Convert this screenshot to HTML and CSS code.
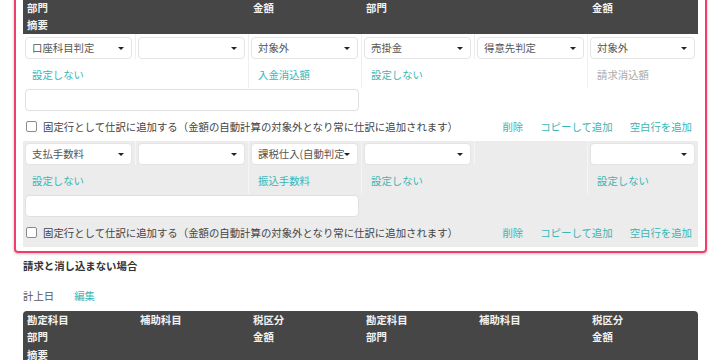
FILE: index.html
```html
<!DOCTYPE html>
<html>
<head>
    <meta charset="utf-8">
    <title>消込設定</title>
    <link rel="stylesheet" href="styles.css">
</head>
<body>
<div class="page">
    <div class="journal-box">
        <div class="journal-head">
            <span>勘定科目</span><span>補助科目</span><span>税区分</span>
            <span>勘定科目</span><span>補助科目</span><span>税区分</span>
            <span>部門</span><span></span><span>金額</span>
            <span>部門</span><span></span><span>金額</span>
            <span class="wide">摘要</span>
        </div>

        <div class="entry first">
            <div class="cell sel"><div class="select"><span>口座科目判定</span><i></i></div></div>
            <div class="cell sel"><div class="select"><span></span><i></i></div></div>
            <div class="cell sel"><div class="select"><span>対象外</span><i></i></div></div>
            <div class="cell sel"><div class="select"><span>売掛金</span><i></i></div></div>
            <div class="cell sel"><div class="select"><span>得意先判定</span><i></i></div></div>
            <div class="cell sel last"><div class="select"><span>対象外</span><i></i></div></div>

            <div class="cell lbl span2"><a href="#">設定しない</a></div>
            <div class="cell lbl"><a href="#">入金消込額</a></div>
            <div class="cell lbl span2"><a href="#">設定しない</a></div>
            <div class="cell lbl last"><span class="muted">請求消込額</span></div>

            <div class="cell memo span3"><input type="text" class="memo-input"></div>
            <div class="cell span3"></div>

            <div class="cell check-row span6">
                <label class="fixed"><span class="box"></span>固定行として仕訳に追加する（金額の自動計算の対象外となり常に仕訳に追加されます）</label>
                <div class="actions">
                    <a href="#">削除</a><a href="#">コピーして追加</a><a href="#">空白行を追加</a>
                </div>
            </div>
        </div>

        <div class="entry alt">
            <div class="cell sel"><div class="select"><span>支払手数料</span><i></i></div></div>
            <div class="cell sel"><div class="select"><span></span><i></i></div></div>
            <div class="cell sel"><div class="select"><span>課税仕入(自動判定)</span><i></i></div></div>
            <div class="cell sel"><div class="select"><span></span><i></i></div></div>
            <div class="cell sel"></div>
            <div class="cell sel last"><div class="select"><span></span><i></i></div></div>

            <div class="cell lbl span2"><a href="#">設定しない</a></div>
            <div class="cell lbl"><a href="#">振込手数料</a></div>
            <div class="cell lbl span2"><a href="#">設定しない</a></div>
            <div class="cell lbl last"><a href="#">設定しない</a></div>

            <div class="cell memo span3"><input type="text" class="memo-input"></div>
            <div class="cell span3"></div>

            <div class="cell check-row span6">
                <label class="fixed"><span class="box"></span>固定行として仕訳に追加する（金額の自動計算の対象外となり常に仕訳に追加されます）</label>
                <div class="actions">
                    <a href="#">削除</a><a href="#">コピーして追加</a><a href="#">空白行を追加</a>
                </div>
            </div>
        </div>
    </div>

    <div class="section">
        <h4>請求と消し込まない場合</h4>
        <div class="date-line">計上日<a href="#">編集</a></div>
        <div class="journal-head rounded">
            <span>勘定科目</span><span>補助科目</span><span>税区分</span>
            <span>勘定科目</span><span>補助科目</span><span>税区分</span>
            <span>部門</span><span></span><span>金額</span>
            <span>部門</span><span></span><span>金額</span>
            <span class="wide">摘要</span>
        </div>
    </div>
</div>
</body>
</html>
```

FILE: styles.css
```css
body {
    margin: 0;
    background: #fff;
    font-family: "Noto Sans CJK JP", "Noto Sans", sans-serif;
    font-size: 10.4px;
    color: #444;
    overflow: hidden;
}

a {
    color: #3ab6b6;
    text-decoration: none;
}

.page {
    padding-left: 14px;
}

/* 仕訳ボックス（スクロールで上端が隠れている） */
.journal-box {
    width: 693px;
    box-sizing: border-box;
    margin-top: -28px;
    padding: 7px 7px 4px 7px;
    border: 2px solid #f23c6e;
    border-radius: 4px;
    box-shadow: 0 1px 3px rgba(0, 0, 0, 0.25);
}

.journal-head {
    display: grid;
    grid-template-columns: repeat(5, 113px) 1fr;
    background: #464646;
    color: #f2f2f2;
    font-weight: bold;
    line-height: 17.5px;
}

.journal-head span {
    padding-left: 4px;
    height: 17.5px;
}

.journal-head .wide {
    grid-column: span 6;
}

.journal-head.rounded {
    border-radius: 4px 4px 0 0;
}

.entry {
    display: grid;
    grid-template-columns: repeat(5, 113px) 1fr;
    background: #fff;
}

.entry.alt {
    background: #ececec;
}

.cell {
    box-sizing: border-box;
}

.sel {
    padding: 2px 3px 0 2px;
    border-right: 1px solid #efefef;
}

.entry.first .sel {
    padding-top: 3.5px;
}

.entry.alt .sel,
.entry.alt .lbl {
    border-right-color: #f5f5f5;
}

.sel.last,
.lbl.last {
    border-right: none;
}

.select {
    position: relative;
    height: 22px;
    box-sizing: border-box;
    background: #fff;
    border: 1px solid #e4e4e4;
    border-radius: 4px;
    color: #555;
    line-height: 20px;
    padding: 0 13px 0 6px;
}

.select span {
    display: block;
    white-space: nowrap;
    overflow: hidden;
}

.select i {
    position: absolute;
    right: 7px;
    top: 9px;
    border-left: 3px solid transparent;
    border-right: 3px solid transparent;
    border-top: 3px solid #222;
}

.lbl {
    height: 29px;
    padding: 1px 0 0 9px;
    line-height: 29px;
    border-right: 1px solid #efefef;
}

.muted {
    color: #aaa;
}

.span2 { grid-column: span 2; }
.span3 { grid-column: span 3; }
.span6 { grid-column: span 6; }

.memo {
    padding: 1px 3px 0 2px;
}

.memo-input {
    display: block;
    width: 100%;
    height: 22px;
    box-sizing: border-box;
    border: 1px solid #e0e0e0;
    border-radius: 4px;
    background: #fff;
    margin: 0;
}

.check-row {
    display: flex;
    align-items: center;
    justify-content: space-between;
    height: 30px;
    padding: 1px 6px 0 3px;
}

.fixed {
    display: flex;
    align-items: center;
    color: #444;
}

.box {
    width: 9px;
    height: 9px;
    border: 1px solid #8a8a8a;
    border-radius: 2px;
    background: #fff;
    margin-right: 6px;
}

.actions {
    display: flex;
    gap: 17px;
}

.section {
    padding-left: 9px;
    width: 675px;
}

.section h4 {
    margin: 3.5px 0 0 0;
    font-size: 10.4px;
    line-height: 17px;
    font-weight: bold;
    color: #333;
}

.date-line {
    margin-top: 13px;
    line-height: 17px;
    color: #555;
}

.date-line a {
    margin-left: 20px;
}

.section .journal-head {
    margin-top: 7px;
}
```
